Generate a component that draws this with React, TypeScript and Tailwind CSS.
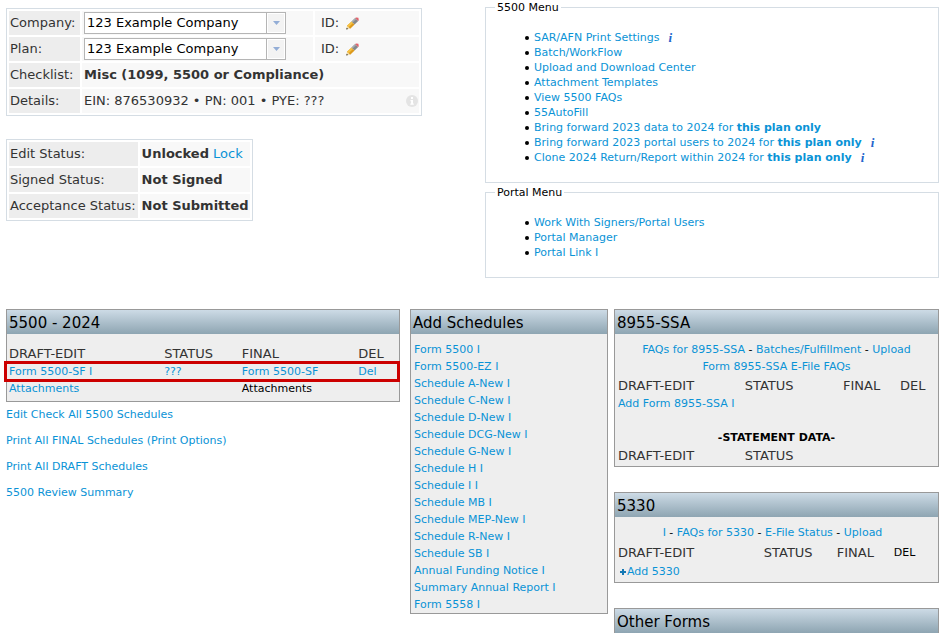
import { useState, type ReactNode } from 'react';

const COMPANIES = ['123 Example Company'];
const PLANS = ['123 Example Company'];

const SCHEDULES = [
  'Form 5500 I',
  'Form 5500-EZ I',
  'Schedule A-New I',
  'Schedule C-New I',
  'Schedule D-New I',
  'Schedule DCG-New I',
  'Schedule G-New I',
  'Schedule H I',
  'Schedule I I',
  'Schedule MB I',
  'Schedule MEP-New I',
  'Schedule R-New I',
  'Schedule SB I',
  'Annual Funding Notice I',
  'Summary Annual Report I',
  'Form 5558 I',
];

interface MenuItem {
  label: string;
  strong?: string;
  info?: boolean;
}

const MENU_5500: MenuItem[] = [
  { label: 'SAR/AFN Print Settings', info: true },
  { label: 'Batch/WorkFlow' },
  { label: 'Upload and Download Center' },
  { label: 'Attachment Templates' },
  { label: 'View 5500 FAQs' },
  { label: '55AutoFill' },
  { label: 'Bring forward 2023 data to 2024 for ', strong: 'this plan only' },
  { label: 'Bring forward 2023 portal users to 2024 for ', strong: 'this plan only', info: true },
  { label: 'Clone 2024 Return/Report within 2024 for ', strong: 'this plan only', info: true },
];

const MENU_PORTAL: MenuItem[] = [
  { label: 'Work With Signers/Portal Users' },
  { label: 'Portal Manager' },
  { label: 'Portal Link I' },
];

const labelCell = 'h-6 bg-[#ededed] py-0 pr-[2px] pl-px text-left font-normal whitespace-nowrap';
const valueCell = 'h-6 bg-[#f8f8f8] py-0 pr-px pl-[2px] whitespace-nowrap';
const headCell = 'p-0 text-left text-[13px] font-normal text-[#333]';

function Link({ children }: { children: ReactNode }) {
  return (
    <a href="#" className="text-[#0a93d6] hover:underline">
      {children}
    </a>
  );
}

function PencilIcon() {
  return (
    <svg viewBox="0 0 13 13" className="h-[13px] w-[13px]" aria-hidden="true">
      <path d="M0.4 12.4 L1 8.8 L4.2 11.8 Z" fill="#f3dfb0" />
      <path d="M1 8.8 L5.6 4.4 L8.6 7.4 L4.2 11.8 Z" fill="#dd9a1c" />
      <path d="M1 8.8 L5.6 4.4 L7.1 5.9 L2.5 10.3 Z" fill="#f6c244" />
      <path d="M5.6 4.4 L9.2 1 L12.2 4 L8.6 7.4 Z" fill="#85888c" />
      <path d="M5.6 4.4 L9.2 1 L10.2 2 L6.6 5.4 Z" fill="#a9acb0" />
      <path d="M9.2 1 L10 0.4 L12.4 0.8 L12.8 3.2 L12.2 4 Z" fill="#e2616b" />
      <path d="M0.4 12.4 L0.7 10.8 L2 12 Z" fill="#111" />
    </svg>
  );
}

function Dropdown({ id, options }: { id: string; options: string[] }) {
  const [value, setValue] = useState(options[0]);

  return (
    <div className="relative w-[202px]">
      <select
        id={id}
        value={value}
        onChange={(e) => setValue(e.target.value)}
        className="block h-[22px] w-full appearance-none border border-[#b5b5b5] bg-white pr-5 pl-[2px] text-[13px] text-black"
      >
        {options.map((option) => (
          <option key={option}>{option}</option>
        ))}
      </select>
      <span className="pointer-events-none absolute inset-y-0 right-0 flex w-5 items-center justify-center border border-[#b5b5b5] bg-[#f3f3f3] shadow-[inset_0_0_0_1px_#fff]">
        <svg viewBox="0 0 7 4" className="h-1 w-[7px]" aria-hidden="true">
          <path d="M0 0H7L3.5 4Z" fill="#93add6" />
        </svg>
      </span>
    </div>
  );
}

function MenuBox({ title, items }: { title: string; items: MenuItem[] }) {
  return (
    <fieldset className="border border-[#d5dde4] pb-[17px] pl-12 text-[11px] leading-[15px]">
      <legend className="-ml-[39px] px-[2px] text-black">{title}</legend>
      <ul className="pt-[15px] text-black">
        {items.map((item) => (
          <li
            key={item.label}
            className="flex items-center before:mr-[5px] before:-ml-[9px] before:size-1 before:rounded-full before:bg-black"
          >
            <Link>
              {item.label}
              {item.strong && <strong>{item.strong}</strong>}
            </Link>
            {item.info && (
              <a
                href="#"
                aria-label="More information"
                className="ml-[9px] font-['Liberation_Serif',serif] text-[13px] leading-[15px] font-bold text-[#2565cc] italic"
              >
                i
              </a>
            )}
          </li>
        ))}
      </ul>
    </fieldset>
  );
}

function Panel({ title, children }: { title: string; children?: ReactNode }) {
  return (
    <section className="border border-[#999] bg-[#eee] text-[11px] leading-[17px]">
      <h2 className="h-6 bg-linear-to-b from-[#cddbe6] to-[#8ea5b2] px-[2px] text-[15px] leading-[26px] text-black">
        {title}
      </h2>
      {children}
    </section>
  );
}

export default function App() {
  return (
    <div className="bg-white pr-2 pl-[6px] font-['Verdana','DejaVu_Sans',sans-serif] text-[13px] text-[#333]">
      <div className="grid grid-cols-[479fr_454fr]">
        <div className="pt-2">
          <table className="w-[416px] border-separate border-spacing-[2px] border border-[#d5dde4]">
            <tbody>
              <tr>
                <th className={`${labelCell} w-[71px]`}>
                  <label htmlFor="company">Company:</label>
                </th>
                <td className={valueCell}>
                  <Dropdown id="company" options={COMPANIES} />
                </td>
                <td className="h-6 w-[104px] bg-[#f8f8f8] py-0 pl-[6px]">
                  <div className="flex items-center gap-[7px]">
                    ID:
                    <button type="button" aria-label="Edit company ID">
                      <PencilIcon />
                    </button>
                  </div>
                </td>
              </tr>
              <tr>
                <th className={labelCell}>
                  <label htmlFor="plan">Plan:</label>
                </th>
                <td className={valueCell}>
                  <Dropdown id="plan" options={PLANS} />
                </td>
                <td className="h-6 bg-[#f8f8f8] py-0 pl-[6px]">
                  <div className="flex items-center gap-[7px]">
                    ID:
                    <button type="button" aria-label="Edit plan ID">
                      <PencilIcon />
                    </button>
                  </div>
                </td>
              </tr>
              <tr>
                <th className={labelCell}>Checklist:</th>
                <td colSpan={2} className={`${valueCell} font-bold`}>
                  Misc (1099, 5500 or Compliance)
                </td>
              </tr>
              <tr>
                <th className={labelCell}>Details:</th>
                <td colSpan={2} className={valueCell}>
                  <div className="flex items-center justify-between">
                    EIN: 876530932 • PN: 001 • PYE: ???
                    <svg viewBox="0 0 12 12" className="h-3 w-3" aria-hidden="true">
                      <circle cx="6" cy="6" r="6" fill="#e4e4e4" />
                      <path d="M5 2H7V4H5ZM4.5 5H7V8.5H7.8V9.7H4.3V8.5H5.1V6.2H4.5Z" fill="#fff" />
                    </svg>
                  </div>
                </td>
              </tr>
            </tbody>
          </table>

          <table className="mt-[23px] border-separate border-spacing-[2px] border border-[#d5dde4]">
            <tbody>
              <tr>
                <th className={labelCell}>Edit Status:</th>
                <td className={valueCell}>
                  <strong>Unlocked</strong> <Link>Lock</Link>
                </td>
              </tr>
              <tr>
                <th className={labelCell}>Signed Status:</th>
                <td className={`${valueCell} font-bold`}>Not Signed</td>
              </tr>
              <tr>
                <th className={labelCell}>Acceptance Status:</th>
                <td className={`${valueCell} font-bold`}>Not Submitted</td>
              </tr>
            </tbody>
          </table>
        </div>

        <div className="flex flex-col gap-[2px]">
          <MenuBox title="5500 Menu" items={MENU_5500} />
          <MenuBox title="Portal Menu" items={MENU_PORTAL} />
        </div>
      </div>

      <div className="mt-[31px] grid grid-cols-[398fr_198fr_325fr] items-start gap-[6px]">
        <div className="pr-1">
          <Panel title="5500 - 2024">
            <div className="px-[2px] pt-[9px] pb-1">
              <table className="w-full table-fixed">
                <thead>
                  <tr className="h-5">
                    <th className={`${headCell} w-[40%]`}>DRAFT-EDIT</th>
                    <th className={`${headCell} w-[20%]`}>STATUS</th>
                    <th className={`${headCell} w-[30%]`}>FINAL</th>
                    <th className={headCell}>DEL</th>
                  </tr>
                </thead>
                <tbody>
                  <tr className="relative">
                    <td>
                      <Link>Form 5500-SF I</Link>
                      <span className="pointer-events-none absolute -top-[2px] -right-[3px] -bottom-[2px] -left-[5px] border-3 border-[#cc0000]" />
                    </td>
                    <td>
                      <Link>???</Link>
                    </td>
                    <td>
                      <Link>Form 5500-SF</Link>
                    </td>
                    <td>
                      <Link>Del</Link>
                    </td>
                  </tr>
                  <tr>
                    <td>
                      <Link>Attachments</Link>
                    </td>
                    <td />
                    <td className="text-black">Attachments</td>
                    <td />
                  </tr>
                </tbody>
              </table>
            </div>
          </Panel>
          <ul className="flex flex-col gap-[9px] pt-1 text-[11px] leading-[17px]">
            <li><Link>Edit Check All 5500 Schedules</Link></li>
            <li><Link>Print All FINAL Schedules</Link> <Link>(Print Options)</Link></li>
            <li><Link>Print All DRAFT Schedules</Link></li>
            <li><Link>5500 Review Summary</Link></li>
          </ul>
        </div>

        <Panel title="Add Schedules">
          <ul className="px-[3px] pt-[7px]">
            {SCHEDULES.map((schedule) => (
              <li key={schedule}>
                <Link>{schedule}</Link>
              </li>
            ))}
          </ul>
        </Panel>

        <div className="flex flex-col gap-[25px]">
          <Panel title="8955-SSA">
            <div className="px-[3px] pt-[7px] pb-px">
              <p className="text-center text-black">
                <Link>FAQs for 8955-SSA</Link> - <Link>Batches/Fulfillment</Link> - <Link>Upload</Link>
                <br />
                <Link>Form 8955-SSA E-File FAQs</Link>
              </p>
              <table className="w-full table-fixed">
                <thead>
                  <tr className="h-5">
                    <th className={`${headCell} w-[40%]`}>DRAFT-EDIT</th>
                    <th className={`${headCell} w-[31%]`}>STATUS</th>
                    <th className={`${headCell} w-[18%]`}>FINAL</th>
                    <th className={headCell}>DEL</th>
                  </tr>
                </thead>
                <tbody>
                  <tr>
                    <td colSpan={4}>
                      <Link>Add Form 8955-SSA I</Link>
                    </td>
                  </tr>
                </tbody>
              </table>
              <h3 className="pt-[17px] text-center font-bold text-black">-STATEMENT DATA-</h3>
              <table className="w-full table-fixed">
                <thead>
                  <tr className="h-[19px]">
                    <th className={`${headCell} w-[40%]`}>DRAFT-EDIT</th>
                    <th className={headCell}>STATUS</th>
                  </tr>
                </thead>
              </table>
            </div>
          </Panel>

          <Panel title="5330">
            <div className="px-[3px] pt-[7px] pb-[2px]">
              <p className="pr-2 text-center text-black">
                <Link>I</Link> - <Link>FAQs for 5330</Link> - <Link>E-File Status</Link> - <Link>Upload</Link>
              </p>
              <table className="w-full table-fixed">
                <thead>
                  <tr className="h-[22px]">
                    <th className={`${headCell} w-[46%]`}>DRAFT-EDIT</th>
                    <th className={`${headCell} w-[23%]`}>STATUS</th>
                    <th className={`${headCell} w-[18%]`}>FINAL</th>
                    <th className="p-0 text-left font-normal text-black">DEL</th>
                  </tr>
                </thead>
                <tbody>
                  <tr>
                    <td colSpan={4}>
                      <a href="#" className="flex items-center gap-px pl-[2px] text-[#0a93d6] hover:underline">
                        <svg viewBox="0 0 6 6" className="h-[6px] w-[6px]" aria-hidden="true">
                          <path d="M2 0H4V2H6V4H4V6H2V4H0V2H2Z" fill="#1478b4" />
                        </svg>
                        Add 5330
                      </a>
                    </td>
                  </tr>
                </tbody>
              </table>
            </div>
          </Panel>

          <Panel title="Other Forms" />
        </div>
      </div>
    </div>
  );
}
